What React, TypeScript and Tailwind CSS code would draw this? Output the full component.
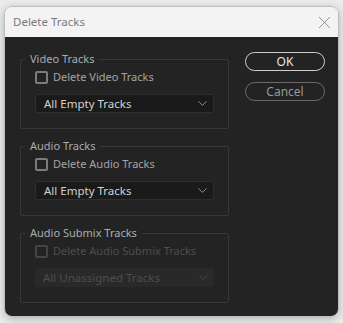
import { ChevronDown, X } from "lucide-react";

type Group = {
    title: string;
    label: string;
    value: string;
    disabled?: boolean;
};

const groups: Group[] = [
    { title: "Video Tracks", label: "Delete Video Tracks", value: "All Empty Tracks" },
    { title: "Audio Tracks", label: "Delete Audio Tracks", value: "All Empty Tracks" },
    { title: "Audio Submix Tracks", label: "Delete Audio Submix Tracks", value: "All Unassigned Tracks", disabled: true },
];

function TrackGroup({ group }: { group: Group }) {
    const off = group.disabled;
    return (
        <fieldset className="w-[209px] border border-[#383838] rounded-[2px] px-[14px] pb-[15px]">
            <legend className="-ml-[10px] px-[5px] text-[11px] leading-[16px] text-[#a9adb2]">
                {group.title}
            </legend>
            <div className="mt-[2px] h-[16px] flex items-center gap-[5px]">
                <span
                    className={
                        off
                            ? "w-[13px] h-[13px] rounded-[2px] border-2 border-[#444]"
                            : "w-[13px] h-[13px] rounded-[2px] border-2 border-[#7c7c7c]"
                    }
                />
                <span className={off ? "text-[11px] text-[#4e4e4e]" : "text-[11px] text-[#a3a3a3]"}>
                    {group.label}
                </span>
            </div>
            <div
                className={
                    off
                        ? "mt-[9px] h-[19px] flex items-center justify-between pl-[8px] pr-[3px] rounded-[2px] bg-[#292929] text-[#4d4d4d]"
                        : "mt-[9px] h-[19px] flex items-center justify-between pl-[8px] pr-[3px] rounded-[2px] bg-[#1a1a1a] border border-[#2e2e2e] text-[#d2d2d2]"
                }
            >
                <span className="text-[11.5px]">{group.value}</span>
                <ChevronDown size={15} strokeWidth={1.3} className={off ? "text-[#4d4d4d]" : "text-[#a8a8a8]"} />
            </div>
        </fieldset>
    );
}

export default function App() {
    return (
        <div className="w-[343px] h-[323px] bg-[#ececec] pt-[6px] pl-[4px]" style={{ fontFamily: '"Noto Sans", "Open Sans", sans-serif' }}>
            <div className="w-[335px] h-[311px] flex flex-col rounded-[8px] overflow-hidden border border-[#bdbdbd] shadow-[0_2px_8px_rgba(0,0,0,0.25)]">
                {/* title bar */}
                <div className="h-[30px] shrink-0 bg-[#f3f3f3] flex items-center justify-between pl-[8px] pr-[3px]">
                    <span className="text-[11.5px] text-[#7a7a7a]">Delete Tracks</span>
                    <X size={21} strokeWidth={0.9} className="text-[#7a7a7a]" />
                </div>
                {/* body */}
                <div className="flex-1 bg-[#232323] flex gap-[16px] pl-[15px] pt-[14px]">
                    <div className="flex flex-col gap-[9px]">
                        {groups.map((g) => (
                            <TrackGroup key={g.title} group={g} />
                        ))}
                    </div>
                    <div className="flex flex-col gap-[11px] pt-[1px]">
                        <button className="w-[80px] h-[19px] rounded-full border-[1.5px] border-[#cfcfcf] text-[12px] leading-none text-[#e6e6e6]">
                            OK
                        </button>
                        <button className="w-[80px] h-[19px] rounded-full border-[1.5px] border-[#6a6a6a] text-[12px] leading-none text-[#979797]">
                            Cancel
                        </button>
                    </div>
                </div>
            </div>
        </div>
    );
}
